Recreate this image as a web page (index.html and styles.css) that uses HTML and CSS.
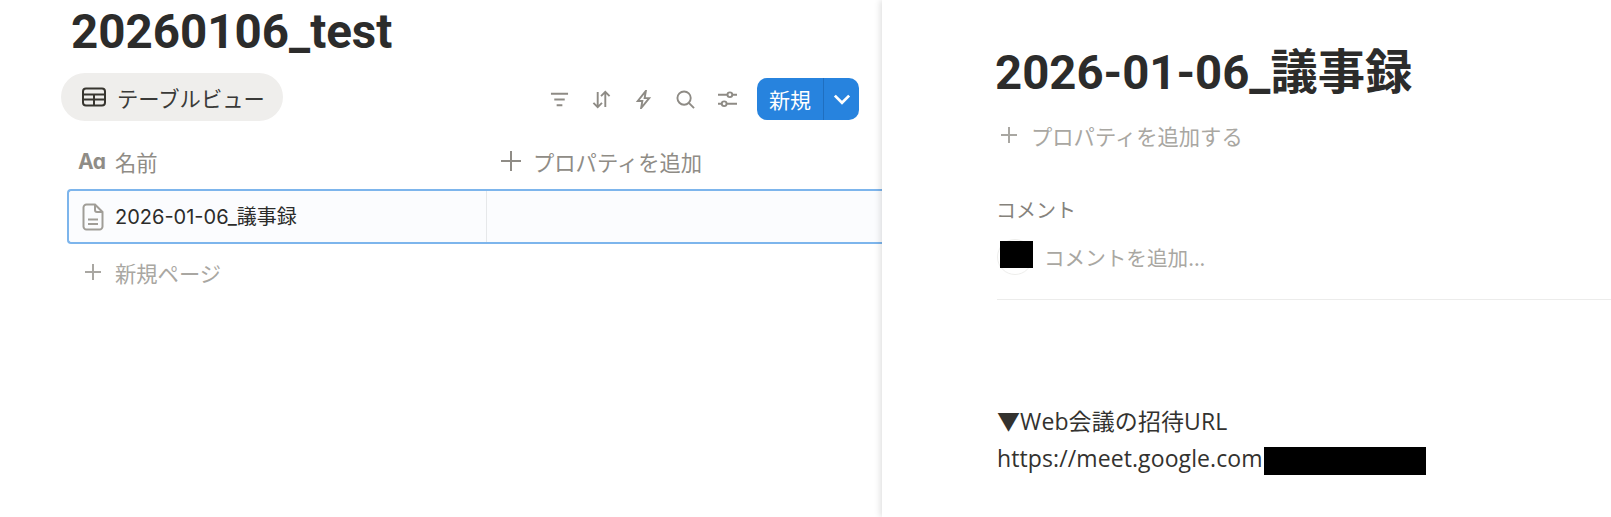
FILE: index.html
```html
<!DOCTYPE html>
<html lang="ja">
<head>
  <meta charset="UTF-8" />
  <title>20260106_test</title>
  <link rel="stylesheet" href="styles.css">
</head>
<body>
  <div class="page">
    <main class="db">
      <h1 class="db-title">20260106_test</h1>

      <div class="toolbar">
        <div class="view-tab">
          <svg class="tab-icon" viewBox="0 0 24 20"><rect x="1" y="1.500" width="22" height="17" rx="3"/><path d="M1 7.500h22M1 12.500h22M12 7.500v11"/></svg>
          <span>テーブルビュー</span>
        </div>
        <div class="tools">
          <div class="tool-icons">
            <svg class="tool" viewBox="0 0 20 20"><path d="M1 4h18M4.500 10h11M7 16h6"/></svg>
            <svg class="tool" viewBox="0 0 20 20"><path d="M6 2v16M1.500 13.500 6 18l4.500-4.500M14 18V2M9.500 6.500 14 2l4.500 4.500"/></svg>
            <svg class="tool" viewBox="0 0 20 20"><path d="M12.500 1 4 11.500h4.800L7.500 19 16 8.500h-4.800z"/></svg>
            <svg class="tool" viewBox="0 0 20 20"><circle cx="8.500" cy="8.500" r="7"/><path d="m13.500 13.500 5.500 5.500"/></svg>
            <svg class="tool" viewBox="0 0 20 20"><circle cx="12.500" cy="5" r="2.500"/><circle cx="6.500" cy="14.500" r="2.500"/><path d="M0 5h10M15 5h5M0 14.500h4M9 14.500h11"/></svg>
          </div>
          <div class="new-btn">
            <span class="new-label">新規</span>
            <span class="new-arrow"><svg viewBox="0 0 16 10"><path d="m1.500 1.500 6.500 6.500 6.500-6.500"/></svg></span>
          </div>
        </div>
      </div>

      <div class="head-row">
        <div class="head-name">
          <span class="aa">Aɑ</span>
          <span>名前</span>
        </div>
        <div class="head-add">
          <svg class="plus-big" viewBox="0 0 20 20"><path d="M10 0v20M0 10h20"/></svg>
          <span>プロパティを追加</span>
        </div>
      </div>

      <div class="row">
        <div class="cell-name">
          <svg class="doc" viewBox="0 0 22 28"><path d="M4.500 1.500H13L20.500 9v14.500a3 3 0 0 1-3 3h-13a3 3 0 0 1-3-3v-19a3 3 0 0 1 3-3z"/><path d="M13 1.500V7a2 2 0 0 0 2 2h5.500M6 16.500h10M6 21h10"/></svg>
          <span class="row-name">2026-01-06_議事録</span>
        </div>
      </div>

      <div class="new-page">
        <svg class="plus-small" viewBox="0 0 16 16"><path d="M8 0v16M0 8h16"/></svg>
        <span>新規ページ</span>
      </div>
    </main>

    <aside class="peek">
      <h2 class="peek-title">2026-01-06_議事録</h2>
      <div class="add-prop">
        <svg class="plus-small" viewBox="0 0 16 16"><path d="M8 0v16M0 8h16"/></svg>
        <span>プロパティを追加する</span>
      </div>
      <div class="comment-label">コメント</div>
      <div class="comment-box">
        <div class="avatar"><div class="avatar-mask"></div></div>
        <span>コメントを追加...</span>
      </div>
      <div class="body-text">
        <p>▼Web会議の招待URL</p>
        <p>https://meet.google.com<span class="mask"></span></p>
      </div>
    </aside>
  </div>
</body>
</html>
```

FILE: styles.css
```css
* { box-sizing: border-box; }
html, body { margin: 0; height: 100%; overflow: hidden; }
body { font-family: "Noto Sans CJK JP", sans-serif; background: #fff; color: #2c2c2b; }
svg { fill: none; display: block; }

.page { display: flex; height: 517px; }

.db { width: 882px; flex: none; padding-left: 61px; overflow: hidden; }
.db-title { margin: 0 0 0 10px; height: 73px; font-family: Roboto, "Noto Sans CJK JP", sans-serif; font-size: 47.500px; line-height: 64px; font-weight: 700; }

.toolbar { display: flex; justify-content: space-between; align-items: center; height: 48px; padding-right: 23px; }
.view-tab { display: flex; align-items: center; width: 222px; height: 48px; padding-left: 21px; background: #efeeec; border-radius: 24px; font-size: 21.300px; color: #3a3a38; }
.tab-icon { width: 24px; height: 20px; margin-right: 11px; stroke: #37352f; stroke-width: 2; }
.tools { display: flex; align-items: center; gap: 20px; padding-top: 4px; }
.tool-icons { display: flex; align-items: center; gap: 23px; }
.tool { width: 19px; height: 19px; stroke: #8e8b85; stroke-width: 2; }
.new-btn { display: flex; height: 42px; background: #2783de; border-radius: 10px; color: #fff; font-size: 21px; }
.new-label { display: flex; align-items: center; padding: 0 12px; border-right: 1px solid #1f6fc0; }
.new-arrow { display: flex; align-items: center; justify-content: center; width: 35px; }
.new-arrow svg { width: 18px; height: 11px; stroke: #fff; stroke-width: 2.500; }

.head-row { display: flex; align-items: center; height: 68px; padding-top: 12px; color: #8f8c86; font-size: 21.300px; }
.head-name { display: flex; align-items: center; width: 440px; padding-left: 17px; }
.aa { width: 37px; font-family: Inter, sans-serif; font-size: 21px; font-weight: 700; letter-spacing: -1px; }
.head-add { display: flex; align-items: center; }
.plus-big { width: 20px; height: 20px; margin-right: 12px; stroke: #8f8c86; stroke-width: 2; }

.row { height: 55px; margin-left: 6px; background: #fbfcfe; border: 2px solid #7db5ec; border-right: none; border-radius: 4px 0 0 4px; }
.cell-name { display: flex; align-items: center; width: 418px; height: 100%; padding-left: 13px; border-right: 1px solid #e6e8ea; font-family: Inter, "Noto Sans CJK JP", sans-serif; font-size: 20px; color: #2c2c2b; }
.row-name { margin-bottom: 2px; }
.doc { width: 22px; height: 28px; margin-right: 11px; stroke: #a09d97; stroke-width: 2; }

.new-page { display: flex; align-items: center; height: 56px; padding-left: 24px; color: #a9a7a2; font-size: 21.300px; }
.plus-small { width: 16px; height: 16px; margin-right: 14px; stroke: #a9a7a2; stroke-width: 2; flex: none; }

.peek { flex: 1; padding: 38px 0 0 115px; box-shadow: -2px 0 6px rgba(0, 0, 0, 0.12); position: relative; }
.peek-title { margin: 0 0 0 -2px; height: 68px; font-family: Roboto, "Noto Sans CJK JP", sans-serif; font-size: 47.300px; line-height: 70px; font-weight: 700; }
.add-prop { display: flex; align-items: center; height: 58px; padding-left: 4px; color: #a9a7a2; font-size: 21.300px; }
.comment-label { margin: 32px 0 0 -1px; font-size: 20px; line-height: 28px; color: #85827c; }
.comment-box { display: flex; align-items: center; height: 76px; border-bottom: 1px solid #ececeb; color: #a9a7a2; font-size: 20.600px; gap: 11px; padding-bottom: 9px; }
.avatar { position: relative; width: 36px; height: 36px; border: 1px solid #eeeeec; border-radius: 50%; }
.avatar-mask { position: absolute; left: 2px; top: 1px; width: 33px; height: 27px; background: #000; }
.body-text { margin-top: 103px; font-family: "Open Sans", "Noto Sans CJK JP", sans-serif; font-size: 23px; line-height: 37px; letter-spacing: 0.1px; color: #33322f; }
.body-text p { margin: 0; }
.mask { display: inline-block; vertical-align: top; width: 162px; height: 28px; margin: 7px 0 0 1px; background: #000; }
```
